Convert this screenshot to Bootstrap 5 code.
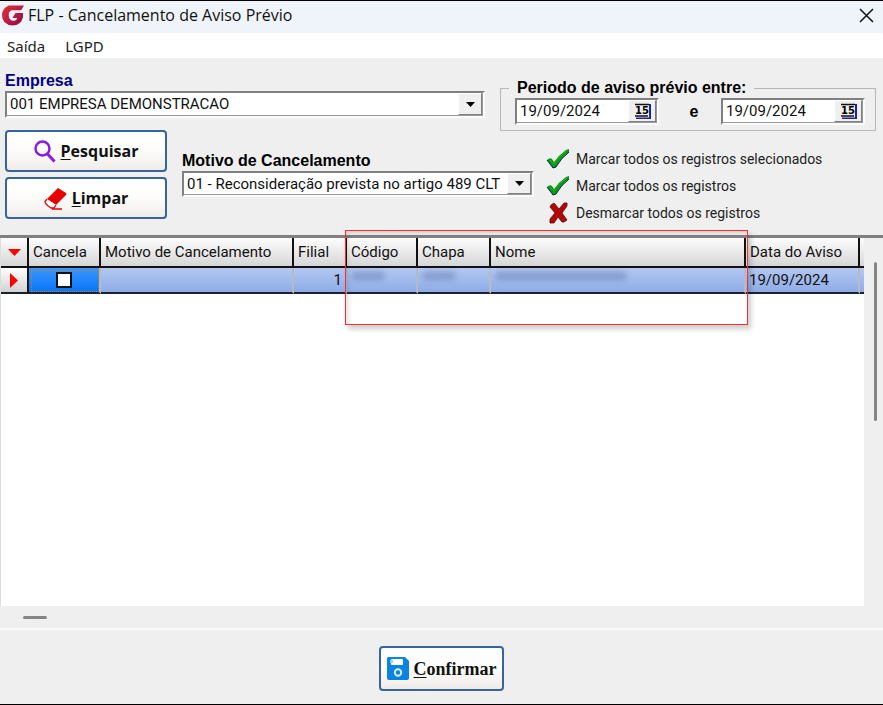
<!DOCTYPE html>
<html lang="pt-BR">
<head>
<meta charset="utf-8">
<meta name="viewport" content="width=device-width, initial-scale=1">
<title>FLP - Cancelamento de Aviso Prévio</title>
<link href="https://cdn.jsdelivr.net/npm/bootstrap@5.3.0/dist/css/bootstrap.min.css" rel="stylesheet">
<style>
  body { font-family: Roboto, "Liberation Sans", Arial, sans-serif; font-size: 15px; line-height: 20px; color: #111; background: #efefef; }
  .app-window { border-top: 1px solid #000; border-bottom: 1px solid #000; }
  .title-strip { height: 32px; background: #eff4fa; font-family: "Open Sans", sans-serif; padding: 0 8px 4px 2px; }
  .title-text { font-size: 16px; line-height: 20px; font-weight: 400; }
  .menu-strip { height: 25px; background: #fff; padding: 0 7px; gap: 20px; }
  .menu-strip a { font-family: "Noto Sans", sans-serif; font-size: 15px; color: #222; text-decoration: none; }
  .form-area { padding: 13px 7px 10px 5px; }
  .row-company { gap: 15px; height: 59px; }
  .bold-label { font-family: "Liberation Sans", Arial, sans-serif; font-weight: 700; font-size: 16px; line-height: 20px; color: #000; }
  .navy { color: #000080; }
  .sunken { border: 2px solid; border-color: #808080 #fbfbfb #fbfbfb #808080; background: #fff; height: 27px; box-shadow: inset -1px -1px #999; padding: 0 1px 1px 0; }
  .sunken-short { height: 26px; }
  .sunken select, .sunken input { appearance: none; border: 0; background: transparent; padding: 0 3px; min-width: 0; font-size: 15px; line-height: 20px; color: #111; border-radius: 0; }
  .raised { width: 24px; flex: none; border: 1px solid; border-color: #fff #808080 #808080 #fff; background: #efefef; padding: 0; display: flex; align-items: center; justify-content: center; }
  .period { flex: none; width: 376px; height: 53px; margin-top: 7px; border: 1px solid #b8b8b8; padding: 0 10px 0 14px; }
  .period legend { float: none; width: auto; margin: 0 0 0 -6px; padding: 0 8px; }
  .date-box { width: 144px; }
  .date-box .raised { width: 28px; }
  .xp-btn { border: 2px solid #37659b; border-radius: 4px; background: linear-gradient(#fff, #fdfcfb 50%, #f0ebe7); color: #111; height: 42px; padding: 0 6px; font-family: "Open Sans", sans-serif; font-size: 16px; font-weight: 700; line-height: 20px; display: flex; align-items: center; justify-content: center; gap: 5px; }
  .xp-btn svg, .marks svg { flex: none; }
  .xp-btn u { text-underline-offset: 2px; }
  .left-btns { width: 162px; gap: 5px; flex: none; }
  .reason { padding-top: 21px; margin: 0 12px 0 15px; min-width: 0; }
  .marks { flex: none; width: 330px; padding: 16px 0 0; gap: 2px; }
  .marks button { border: 0; background: none; padding: 0; color: #222; height: 25px; font-size: 14px; text-align: left; display: flex; align-items: center; gap: 6px; }
  .grid-area { border-top: 3px solid #808080; min-height: 370px; }
  .grid-sheet { background: #fff; border-left: 1px solid #ddd; }
  .data-grid { table-layout: fixed; width: 100%; border-collapse: separate; border-spacing: 0; color: #111; }
  .data-grid th { height: 30px; font-weight: 400; padding: 0 4px; background: linear-gradient(#fdfdfd, #d6d6d6); border-right: 2px solid #111; border-bottom: 2px solid #111; white-space: nowrap; overflow: hidden; }
  .data-grid td { height: 26px; padding: 0 3px; background: linear-gradient(#b3c8f2, #8eace6); border-right: 2px solid #b4bac8; border-bottom: 2px solid #1b2033; white-space: nowrap; overflow: hidden; }
  .data-grid .mark-cell { background: linear-gradient(#fff, #d2d2d2); border-right-color: #111; padding: 0; }
  .data-grid .focus-cell { background: linear-gradient(#3c96ff, #0676f8); outline: 1px dotted #b98030; outline-offset: -3px; }
  .data-grid .last-cell { border-right: 0; padding: 0; }
  .data-grid input { appearance: none; width: 16px; height: 16px; border: 2px solid #111; background: #fff; display: block; margin: 0 auto; }
  .data-grid input:checked { background: #111; }
  .masked { height: 8px; background: #7890c4; filter: blur(3px); margin: 0 2px 8px; opacity: 0.8; }
  .mask-s { width: 32px; } .mask-l { width: 130px; }
  .scroll-v { width: 19px; flex: none; padding: 24px 4px 0 9px; }
  .scroll-v div { width: 3px; height: 159px; background: #858585; border-radius: 2px; margin-left: 1px; }
  .scroll-h { height: 24px; border-bottom: 2px solid #fafafa; padding: 10px 0 0 23px; }
  .scroll-h div { width: 24px; height: 3px; background: #858585; border-radius: 2px; }
  .callout-frame { position: absolute; left: 345px; top: -8px; width: 403px; height: 95px; box-shadow: inset 0 0 0 1px #ff2a2a, 3px 4px 5px rgba(0,0,0,.2), inset 3px 3px 4px rgba(0,0,0,.13); pointer-events: none; z-index: 2; }
  .footer-area { padding: 16px 0 13px; }
  .confirm { font-family: "Liberation Serif", serif; font-size: 18px; width: 125px; height: 45px; }
</style>
</head>
<body>
<div class="app-window d-flex flex-column min-vh-100">
  <header class="title-strip d-flex align-items-center">
    <svg class="me-1" width="22" height="23" viewBox="0 0 23 23" aria-hidden="true">
      <defs><linearGradient id="logoFill" x1="0" y1="0" x2="1" y2="1"><stop offset="0" stop-color="#e0342e"/><stop offset=".5" stop-color="#c01a45"/><stop offset="1" stop-color="#7a1040"/></linearGradient></defs>
      <path fill="url(#logoFill)" d="M7 1H23L20 6H10Q7 7 7 11Q7 16 11 17Q15 17 16 14H11L14 9H22V13Q20 22 11 22Q0 21 0 11Q0 4 7 1Z"/>
    </svg>
    <h1 class="title-text m-0 flex-grow-1">FLP - Cancelamento de Aviso Prévio</h1>
    <button class="btn p-0 border-0 d-flex" aria-label="Fechar"><svg width="17" height="17" viewBox="0 0 17 17"><path d="M2 2L15 15M15 2L2 15" stroke="#111" stroke-width="1.5"/></svg></button>
  </header>
  <nav class="menu-strip d-flex align-items-center"><a href="#">Saída</a><a href="#">LGPD</a></nav>

  <form class="form-area">
    <div class="row-company d-flex">
      <div class="flex-grow-1">
        <label class="bold-label navy d-block" for="empresa">Empresa</label>
        <div class="sunken d-flex">
          <select id="empresa" class="flex-grow-1"><option>001 EMPRESA DEMONSTRACAO</option></select>
          <span class="raised" aria-hidden="true"><svg width="9" height="5"><path d="M0 0H9L4.500 5Z"/></svg></span>
        </div>
      </div>
      <fieldset class="period">
        <legend class="bold-label">Periodo de aviso prévio entre:</legend>
        <div class="d-flex justify-content-between align-items-center">
          <div class="sunken date-box d-flex">
            <input type="text" class="flex-grow-1" value="19/09/2024" aria-label="Data inicial" size="8">
            <button type="button" class="raised" aria-label="Abrir calendário inicial"><svg width="17" height="16" viewBox="0 0 17 16"><path d="M2 15.500H16V1" fill="none" stroke="#22228a" stroke-width="2"/><path d="M1 1.500H15M1 13H14" stroke="#111" stroke-width="1.500"/><text x="1" y="11" font-family="DejaVu Sans" font-weight="700" font-size="10">15</text></svg></button>
          </div>
          <span class="bold-label ms-2">e</span>
          <div class="sunken date-box d-flex">
            <input type="text" class="flex-grow-1" value="19/09/2024" aria-label="Data final" size="8">
            <button type="button" class="raised" aria-label="Abrir calendário final"><svg width="17" height="16" viewBox="0 0 17 16"><path d="M2 15.500H16V1" fill="none" stroke="#22228a" stroke-width="2"/><path d="M1 1.500H15M1 13H14" stroke="#111" stroke-width="1.500"/><text x="1" y="11" font-family="DejaVu Sans" font-weight="700" font-size="10">15</text></svg></button>
          </div>
        </div>
      </fieldset>
    </div>

    <div class="d-flex">
      <div class="left-btns d-flex flex-column">
        <button type="button" class="xp-btn"><svg width="22" height="23" viewBox="0 0 22 23" aria-hidden="true"><circle cx="8.500" cy="8.500" r="7" fill="none" stroke="#8a1be0" stroke-width="2.500"/><path d="M13.500 14L20.500 21.500" stroke="#8a1be0" stroke-width="3"/></svg><span><u>P</u>esquisar</span></button>
        <button type="button" class="xp-btn"><svg width="23" height="23" viewBox="0 0 23 23" aria-hidden="true"><path d="M14 1L22 6Q23 7 22 8L12 18L3 12Z" fill="#e80000"/><path d="M3 12L1 14.500Q1 17 7 21H10L12 18" fill="#fff" stroke="#e80000" stroke-width="1.300"/><path d="M8 22H18" stroke="#e80000" stroke-width="1.500"/></svg><span><u>L</u>impar</span></button>
      </div>
      <div class="reason flex-grow-1">
        <label class="bold-label d-block" for="motivo">Motivo de Cancelamento</label>
        <div class="sunken sunken-short d-flex">
          <select id="motivo" class="flex-grow-1"><option>01 - Reconsideração prevista no artigo 489 CLT</option></select>
          <span class="raised" aria-hidden="true"><svg width="9" height="5"><path d="M0 0H9L4.500 5Z"/></svg></span>
        </div>
      </div>
      <div class="marks d-flex flex-column">
        <button type="button"><svg width="24" height="22" viewBox="0 0 24 22" aria-hidden="true"><path d="M1 12Q4 9 6 11L8 14Q13 7 20 2L23 1V4Q15 10 10 19L7 20Z" fill="#079a10"/><path d="M1 12L7 20L10 19Q15 10 23 4" fill="none" stroke="#10205c" stroke-width="1"/><path d="M4 12L8 16Q13 8 21 3" fill="none" stroke="#18bb25" stroke-width="1"/></svg>Marcar todos os registros selecionados</button>
        <button type="button"><svg width="24" height="22" viewBox="0 0 24 22" aria-hidden="true"><path d="M1 12Q4 9 6 11L8 14Q13 7 20 2L23 1V4Q15 10 10 19L7 20Z" fill="#079a10"/><path d="M1 12L7 20L10 19Q15 10 23 4" fill="none" stroke="#10205c" stroke-width="1"/><path d="M4 12L8 16Q13 8 21 3" fill="none" stroke="#18bb25" stroke-width="1"/></svg>Marcar todos os registros</button>
        <button type="button"><svg width="24" height="22" viewBox="0 0 24 22" aria-hidden="true"><path d="M5 3L8 1L13 7L18 1H21V4L16 11L21 18L18 20H16L12 15L8 21H4V17L9 11L4 5Z" fill="#b40808" stroke="#5c0606" stroke-width=".8"/></svg>Desmarcar todos os registros</button>
      </div>
    </div>
  </form>

  <main class="grid-area d-flex flex-grow-1 position-relative">
    <div class="grid-sheet flex-grow-1">
      <table class="data-grid">
        <colgroup><col style="width:28px"><col style="width:72px"><col style="width:193px"><col style="width:53px"><col style="width:71px"><col style="width:73px"><col><col style="width:114px"><col style="width:4px"></colgroup>
        <thead><tr>
          <th scope="col" class="text-center p-0" aria-label="Opções"><svg class="d-block mx-auto" width="13" height="7"><path d="M0 0H13L6.500 7Z" fill="red"/></svg></th>
          <th scope="col">Cancela</th><th scope="col">Motivo de Cancelamento</th><th scope="col">Filial</th><th scope="col">Código</th><th scope="col">Chapa</th><th scope="col">Nome</th><th scope="col">Data do Aviso</th><th class="last-cell" aria-hidden="true"></th>
        </tr></thead>
        <tbody><tr>
          <td class="mark-cell"><svg class="d-block mx-auto" width="8" height="15"><path d="M0 0L8 7.500L0 15Z" fill="red"/></svg></td>
          <td class="focus-cell"><input type="checkbox" aria-label="Cancela"></td><td></td><td class="text-end">1</td>
          <td><div class="masked mask-s"></div></td><td><div class="masked mask-s"></div></td><td><div class="masked mask-l"></div></td><td>19/09/2024</td><td class="last-cell"></td>
        </tr></tbody>
      </table>
    </div>
    <div class="scroll-v"><div></div></div>
    <div class="callout-frame"></div>
  </main>
  <div class="scroll-h"><div></div></div>

  <footer class="footer-area d-flex justify-content-center">
    <button type="button" class="xp-btn confirm"><svg width="22" height="23" viewBox="0 0 22 23" aria-hidden="true"><path d="M1 0H18L22 4V21Q22 23 20 23H2Q0 23 0 21V1Z" fill="#0a84e0"/><rect x="4" y="2" width="12" height="6" rx="1" fill="#fff"/><rect x="3" y="3" width="3" height="3" fill="#9bd0f8"/><circle cx="11" cy="15.500" r="3.200" fill="none" stroke="#d8efff" stroke-width="2"/></svg><span><u>C</u>onfirmar</span></button>
  </footer>
</div>
<script src="https://cdn.jsdelivr.net/npm/bootstrap@5.3.0/dist/js/bootstrap.bundle.min.js"></script>
</body>
</html>
